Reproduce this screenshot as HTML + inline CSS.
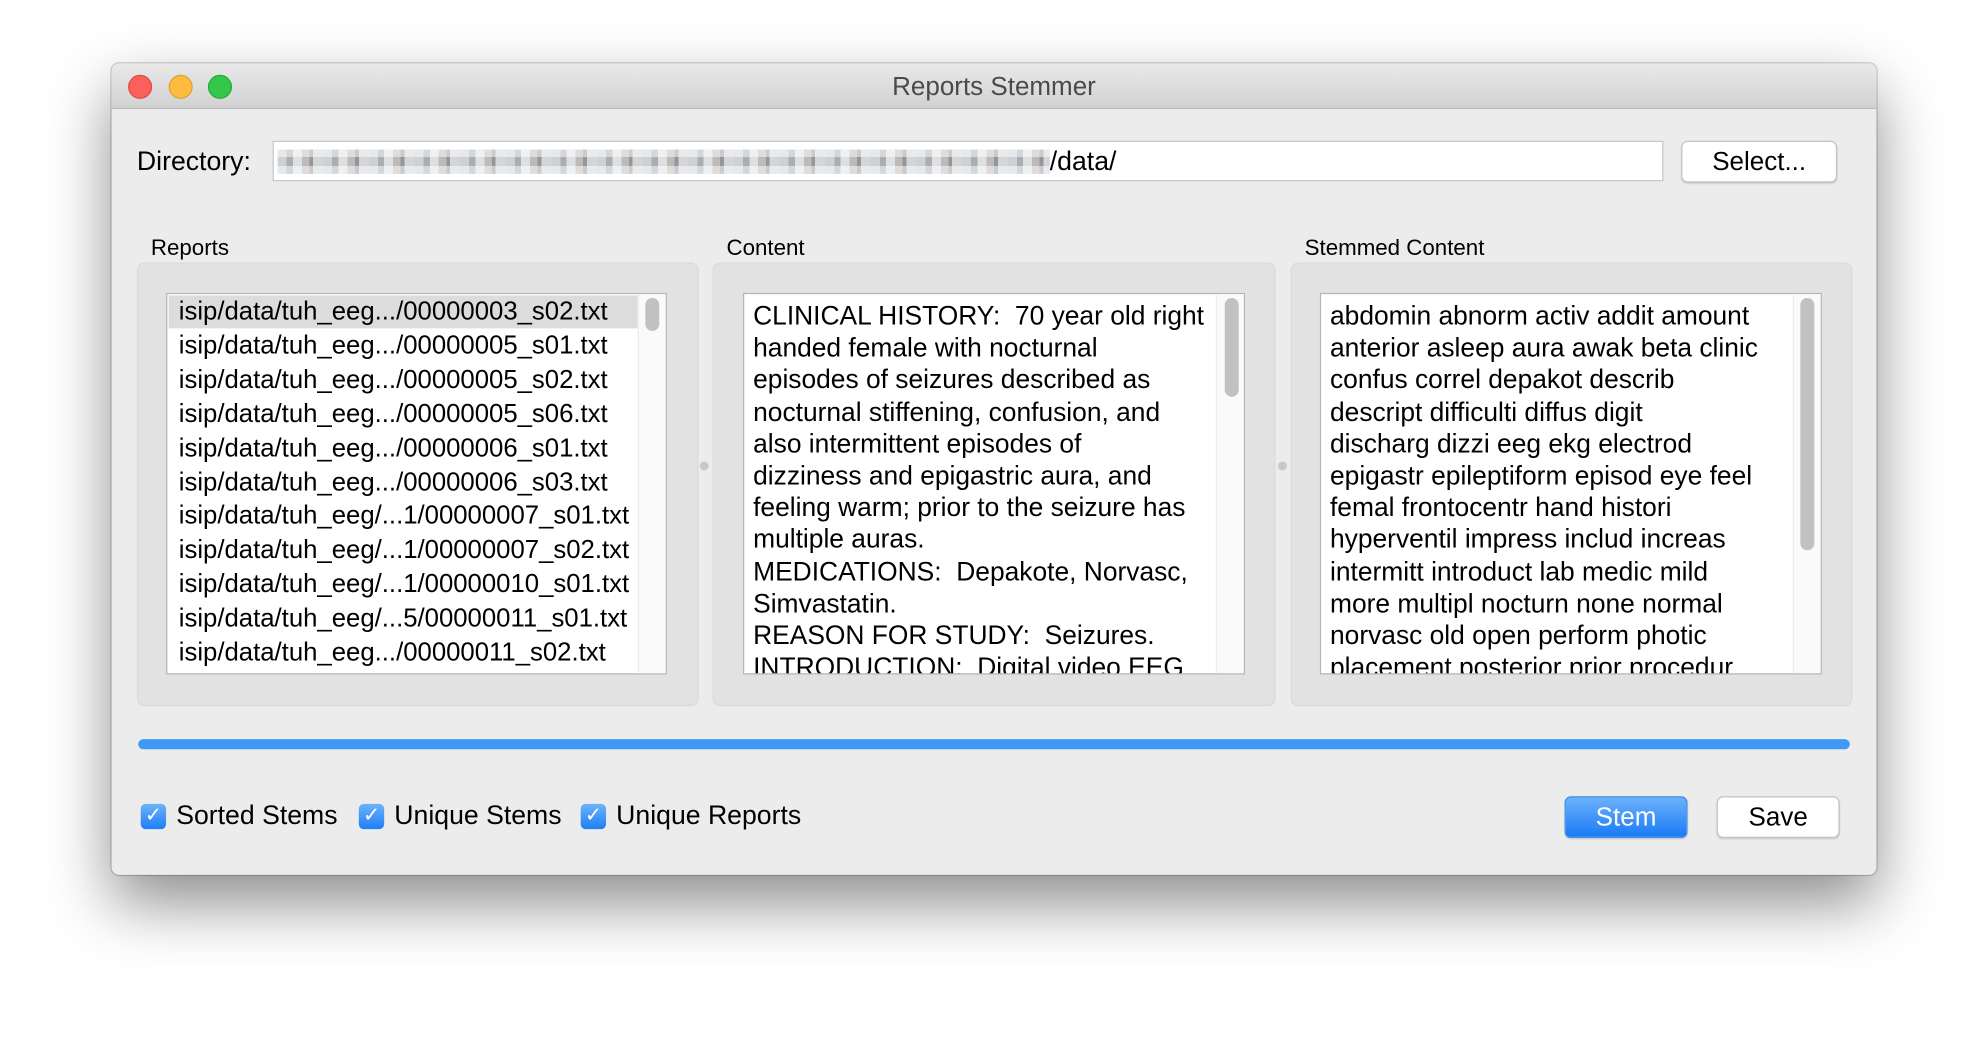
<!DOCTYPE html>
<html><head><meta charset="utf-8"><style>
html,body{margin:0;padding:0;background:#fff;width:1988px;height:1036px;overflow:hidden}
#s{position:absolute;left:0;top:0;width:1568px;height:818px;transform:scale(1.26786);transform-origin:0 0;font-family:"Liberation Sans",sans-serif;color:#000}
.a{position:absolute}
.win{left:88px;top:50px;width:1392px;height:640px;background:#ececec;border-radius:6px;box-shadow:0 22px 50px rgba(0,0,0,.45),0 0 0 1px rgba(0,0,0,.18);overflow:hidden}
.tb{left:0;top:0;width:1392px;height:35px;background:linear-gradient(#e9e9e9,#d2d2d2);border-bottom:1px solid #b9b9b9}
.dot{width:18px;height:18px;border-radius:50%;top:9px}
.lbl{font-size:17.6px}
.grp{background:#e2e2e2;border:1px solid #dadada;border-radius:6px;top:157px;height:348px}
.box{background:#fff;border:1px solid #b5b5b5;top:181px;height:299px;overflow:hidden}
.txt{font-size:20.8px;line-height:25.2px;white-space:pre;left:7px;top:5px}
.thumb{background:#c1c1c1;border-radius:6px;width:11px}
.btn{background:#fff;border:1px solid #c4c4c4;border-radius:5px;box-shadow:0 1px 1px rgba(0,0,0,.12);font-size:20.5px;text-align:center;line-height:31px}
.cb{width:20px;height:20px;border-radius:4px;background:linear-gradient(#6cb3fa,#1f7ef7);top:584px;color:#fff;font-size:16px;text-align:center;line-height:20px}
.cl{font-size:21px;top:582px}
</style></head><body><div id="s">
<div class="a win">
 <div class="a tb"></div>
 <div class="a dot" style="left:13px;background:#fc605b;border:1px solid #de4a44;width:17px;height:17px"></div>
 <div class="a dot" style="left:45px;background:#fdbc40;border:1px solid #dea236;width:17px;height:17px"></div>
 <div class="a dot" style="left:76px;background:#34c84a;border:1px solid #27aa35;width:17px;height:17px"></div>
 <div class="a" style="left:0;width:1392px;top:7px;text-align:center;font-size:20.5px;color:#4a4a4a">Reports Stemmer</div>

 <div class="a" style="left:20px;top:66px;font-size:21px">Directory:</div>
 <div class="a" style="left:127px;top:61px;width:1095px;height:30px;background:#fff;border:1px solid #c6c6c6">
  <div class="a" style="left:3px;top:6px;width:609px;height:19px;opacity:.75;background:repeating-linear-gradient(90deg,#bcc2c8 0 7px,#8d9298 7px 12px,#d2d6da 12px 19px,#a7a3a0 19px 25px,#6f747a 25px 28px,#c4c8cc 28px 36px)"></div>
  <div class="a" style="left:3px;top:6px;width:609px;height:19px;background:repeating-linear-gradient(0deg,rgba(255,255,255,.5) 0 6px,rgba(255,255,255,0) 6px 13px)"></div>
  <div class="a" style="left:612px;top:4px;font-size:21px">/data/</div>
 </div>
 <div class="a btn" style="left:1238px;top:61px;width:121px;height:31px">Select...</div>

 <div class="a lbl" style="left:31px;top:135px">Reports</div>
 <div class="a lbl" style="left:485px;top:135px">Content</div>
 <div class="a lbl" style="left:941px;top:135px">Stemmed Content</div>

 <div class="a grp" style="left:20px;width:441px"></div>
 <div class="a grp" style="left:474px;width:442px"></div>
 <div class="a grp" style="left:930px;width:441px"></div>
 <div class="a" style="left:464px;top:314px;width:7px;height:7px;border-radius:50%;background:#c8c8c8"></div>
 <div class="a" style="left:920px;top:314px;width:7px;height:7px;border-radius:50%;background:#c8c8c8"></div>

 <div class="a box" style="left:43px;width:393px">
  <div class="a" style="left:1px;top:1px;width:370px;height:26px;background:#dcdcdc"></div>
  <div class="a" style="left:371px;top:0;width:22px;height:299px;background:#fafafa;border-left:1px solid #ececec"></div>
  <div class="a thumb" style="left:377px;top:3px;height:26px"></div>
  <div class="a" style="left:9px;top:1px;font-size:20.3px;line-height:26.9px;white-space:pre">isip/data/tuh_eeg.../00000003_s02.txt
isip/data/tuh_eeg.../00000005_s01.txt
isip/data/tuh_eeg.../00000005_s02.txt
isip/data/tuh_eeg.../00000005_s06.txt
isip/data/tuh_eeg.../00000006_s01.txt
isip/data/tuh_eeg.../00000006_s03.txt
isip/data/tuh_eeg/...1/00000007_s01.txt
isip/data/tuh_eeg/...1/00000007_s02.txt
isip/data/tuh_eeg/...1/00000010_s01.txt
isip/data/tuh_eeg/...5/00000011_s01.txt
isip/data/tuh_eeg.../00000011_s02.txt</div>
 </div>

 <div class="a box" style="left:498px;width:394px">
  <div class="a" style="left:372px;top:0;width:22px;height:299px;background:#fafafa;border-left:1px solid #ececec"></div>
  <div class="a thumb" style="left:379px;top:3px;height:78px"></div>
  <div class="a txt">CLINICAL HISTORY:  70 year old right
handed female with nocturnal
episodes of seizures described as
nocturnal stiffening, confusion, and
also intermittent episodes of
dizziness and epigastric aura, and
feeling warm; prior to the seizure has
multiple auras.
MEDICATIONS:  Depakote, Norvasc,
Simvastatin.
REASON FOR STUDY:  Seizures.
INTRODUCTION:  Digital video EEG</div>
 </div>

 <div class="a box" style="left:953px;width:394px">
  <div class="a" style="left:372px;top:0;width:22px;height:299px;background:#fafafa;border-left:1px solid #ececec"></div>
  <div class="a thumb" style="left:378px;top:3px;height:199px"></div>
  <div class="a txt">abdomin abnorm activ addit amount
anterior asleep aura awak beta clinic
confus correl depakot describ
descript difficulti diffus digit
discharg dizzi eeg ekg electrod
epigastr epileptiform episod eye feel
femal frontocentr hand histori
hyperventil impress includ increas
intermitt introduct lab medic mild
more multipl nocturn none normal
norvasc old open perform photic
placement posterior prior procedur</div>
 </div>

 <div class="a" style="left:21px;top:533px;width:1350px;height:8px;border-radius:4px;background:#3f99f5"></div>

 <div class="a cb" style="left:23px">✓</div><div class="a cl" style="left:51px">Sorted Stems</div>
 <div class="a cb" style="left:195px">✓</div><div class="a cl" style="left:223px">Unique Stems</div>
 <div class="a cb" style="left:370px">✓</div><div class="a cl" style="left:398px">Unique Reports</div>

 <div class="a btn" style="left:1146px;top:578px;width:95px;height:31px;background:linear-gradient(#6cb1fb,#1a7bf6);border-color:#3d8de8;color:#fff">Stem</div>
 <div class="a btn" style="left:1266px;top:578px;width:95px;height:31px">Save</div>
</div>
</div></body></html>
